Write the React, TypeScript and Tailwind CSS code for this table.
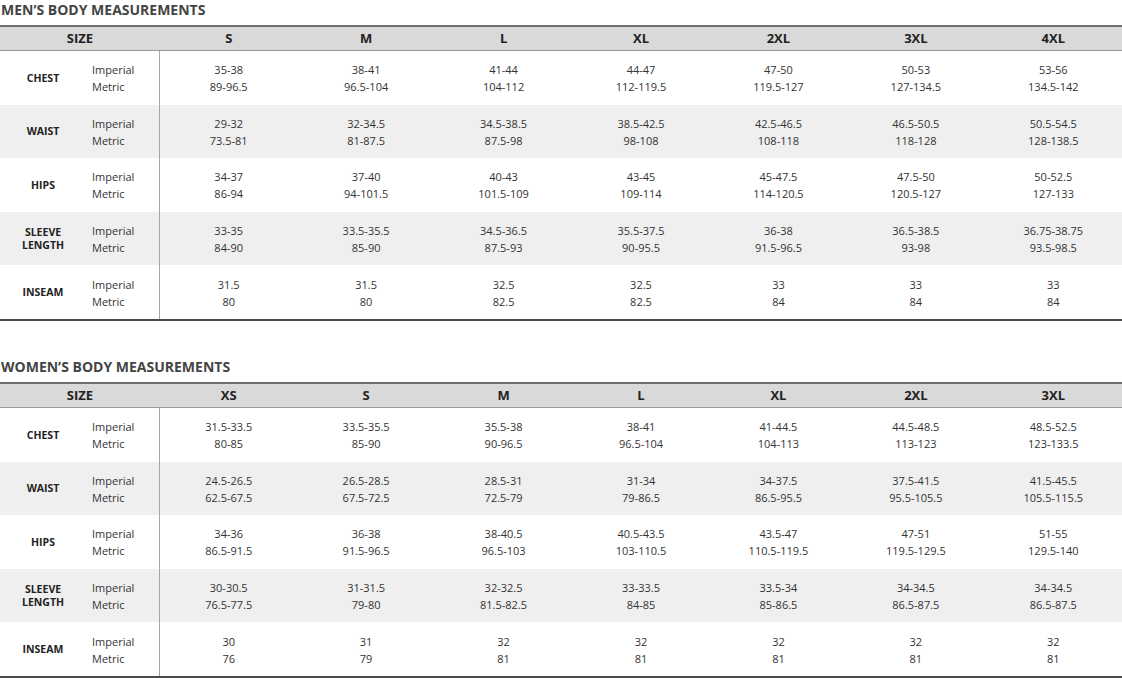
const font = { fontFamily: '"Open Sans", "Noto Sans", sans-serif' };

type Row = { label: string[]; values: [string, string][] };

interface TableProps {
  title: string;
  sizes: string[];
  rows: Row[];
}

const men: TableProps = {
  title: 'MEN’S BODY MEASUREMENTS',
  sizes: ['S', 'M', 'L', 'XL', '2XL', '3XL', '4XL'],
  rows: [
    { label: ['CHEST'], values: [['35-38', '89-96.5'], ['38-41', '96.5-104'], ['41-44', '104-112'], ['44-47', '112-119.5'], ['47-50', '119.5-127'], ['50-53', '127-134.5'], ['53-56', '134.5-142']] },
    { label: ['WAIST'], values: [['29-32', '73.5-81'], ['32-34.5', '81-87.5'], ['34.5-38.5', '87.5-98'], ['38.5-42.5', '98-108'], ['42.5-46.5', '108-118'], ['46.5-50.5', '118-128'], ['50.5-54.5', '128-138.5']] },
    { label: ['HIPS'], values: [['34-37', '86-94'], ['37-40', '94-101.5'], ['40-43', '101.5-109'], ['43-45', '109-114'], ['45-47.5', '114-120.5'], ['47.5-50', '120.5-127'], ['50-52.5', '127-133']] },
    { label: ['SLEEVE', 'LENGTH'], values: [['33-35', '84-90'], ['33.5-35.5', '85-90'], ['34.5-36.5', '87.5-93'], ['35.5-37.5', '90-95.5'], ['36-38', '91.5-96.5'], ['36.5-38.5', '93-98'], ['36.75-38.75', '93.5-98.5']] },
    { label: ['INSEAM'], values: [['31.5', '80'], ['31.5', '80'], ['32.5', '82.5'], ['32.5', '82.5'], ['33', '84'], ['33', '84'], ['33', '84']] },
  ],
};

const women: TableProps = {
  title: 'WOMEN’S BODY MEASUREMENTS',
  sizes: ['XS', 'S', 'M', 'L', 'XL', '2XL', '3XL'],
  rows: [
    { label: ['CHEST'], values: [['31.5-33.5', '80-85'], ['33.5-35.5', '85-90'], ['35.5-38', '90-96.5'], ['38-41', '96.5-104'], ['41-44.5', '104-113'], ['44.5-48.5', '113-123'], ['48.5-52.5', '123-133.5']] },
    { label: ['WAIST'], values: [['24.5-26.5', '62.5-67.5'], ['26.5-28.5', '67.5-72.5'], ['28.5-31', '72.5-79'], ['31-34', '79-86.5'], ['34-37.5', '86.5-95.5'], ['37.5-41.5', '95.5-105.5'], ['41.5-45.5', '105.5-115.5']] },
    { label: ['HIPS'], values: [['34-36', '86.5-91.5'], ['36-38', '91.5-96.5'], ['38-40.5', '96.5-103'], ['40.5-43.5', '103-110.5'], ['43.5-47', '110.5-119.5'], ['47-51', '119.5-129.5'], ['51-55', '129.5-140']] },
    { label: ['SLEEVE', 'LENGTH'], values: [['30-30.5', '76.5-77.5'], ['31-31.5', '79-80'], ['32-32.5', '81.5-82.5'], ['33-33.5', '84-85'], ['33.5-34', '85-86.5'], ['34-34.5', '86.5-87.5'], ['34-34.5', '86.5-87.5']] },
    { label: ['INSEAM'], values: [['30', '76'], ['31', '79'], ['32', '81'], ['32', '81'], ['32', '81'], ['32', '81'], ['32', '81']] },
  ],
};

const cols = 'grid grid-cols-[86px_74px_repeat(7,minmax(0,1fr))]';

function SizeTable({ title, sizes, rows }: TableProps) {
  return (
    <section>
      <h2 className="h-[25px] pl-[1px] pt-[1px] text-[14px] font-bold leading-[17px] text-[#444]">{title}</h2>
      <div className="border-t-2 border-b-2 border-t-[#6e6e6e] border-b-[#4a4a4a]">
        <div className={`${cols} h-[24px] items-center border-b border-[#9a9a9a] bg-[#d9d9d9] text-[13px] font-bold text-[#222]`}>
          <div className="col-span-2 text-center">SIZE</div>
          {sizes.map((s) => (
            <div key={s} className="text-center">{s}</div>
          ))}
        </div>
        {rows.map((row, i) => (
          <div
            key={row.label.join(' ')}
            className={`${cols} h-[53.6px] items-center pt-[1px] text-[11px] leading-[17px] text-[#333] ${i % 2 ? 'bg-[#efefef]' : 'bg-white'}`}
          >
            <div className="text-center text-[10.5px] font-bold leading-[13px] text-[#222]">
              {row.label.map((l) => (
                <div key={l}>{l}</div>
              ))}
            </div>
            <div className="-mt-[1px] flex h-[53.6px] flex-col justify-center border-r-[1.5px] border-[#a6a6a6] pl-[6px] pt-[1px]">
              <div>Imperial</div>
              <div>Metric</div>
            </div>
            {row.values.map(([imp, met], j) => (
              <div key={j} className="text-center">
                <div>{imp}</div>
                <div>{met}</div>
              </div>
            ))}
          </div>
        ))}
      </div>
    </section>
  );
}

export default function App() {
  return (
    <div className="flex h-[678px] w-[1122px] flex-col gap-[36px] overflow-hidden bg-white" style={font}>
      <SizeTable {...men} />
      <SizeTable {...women} />
    </div>
  );
}
